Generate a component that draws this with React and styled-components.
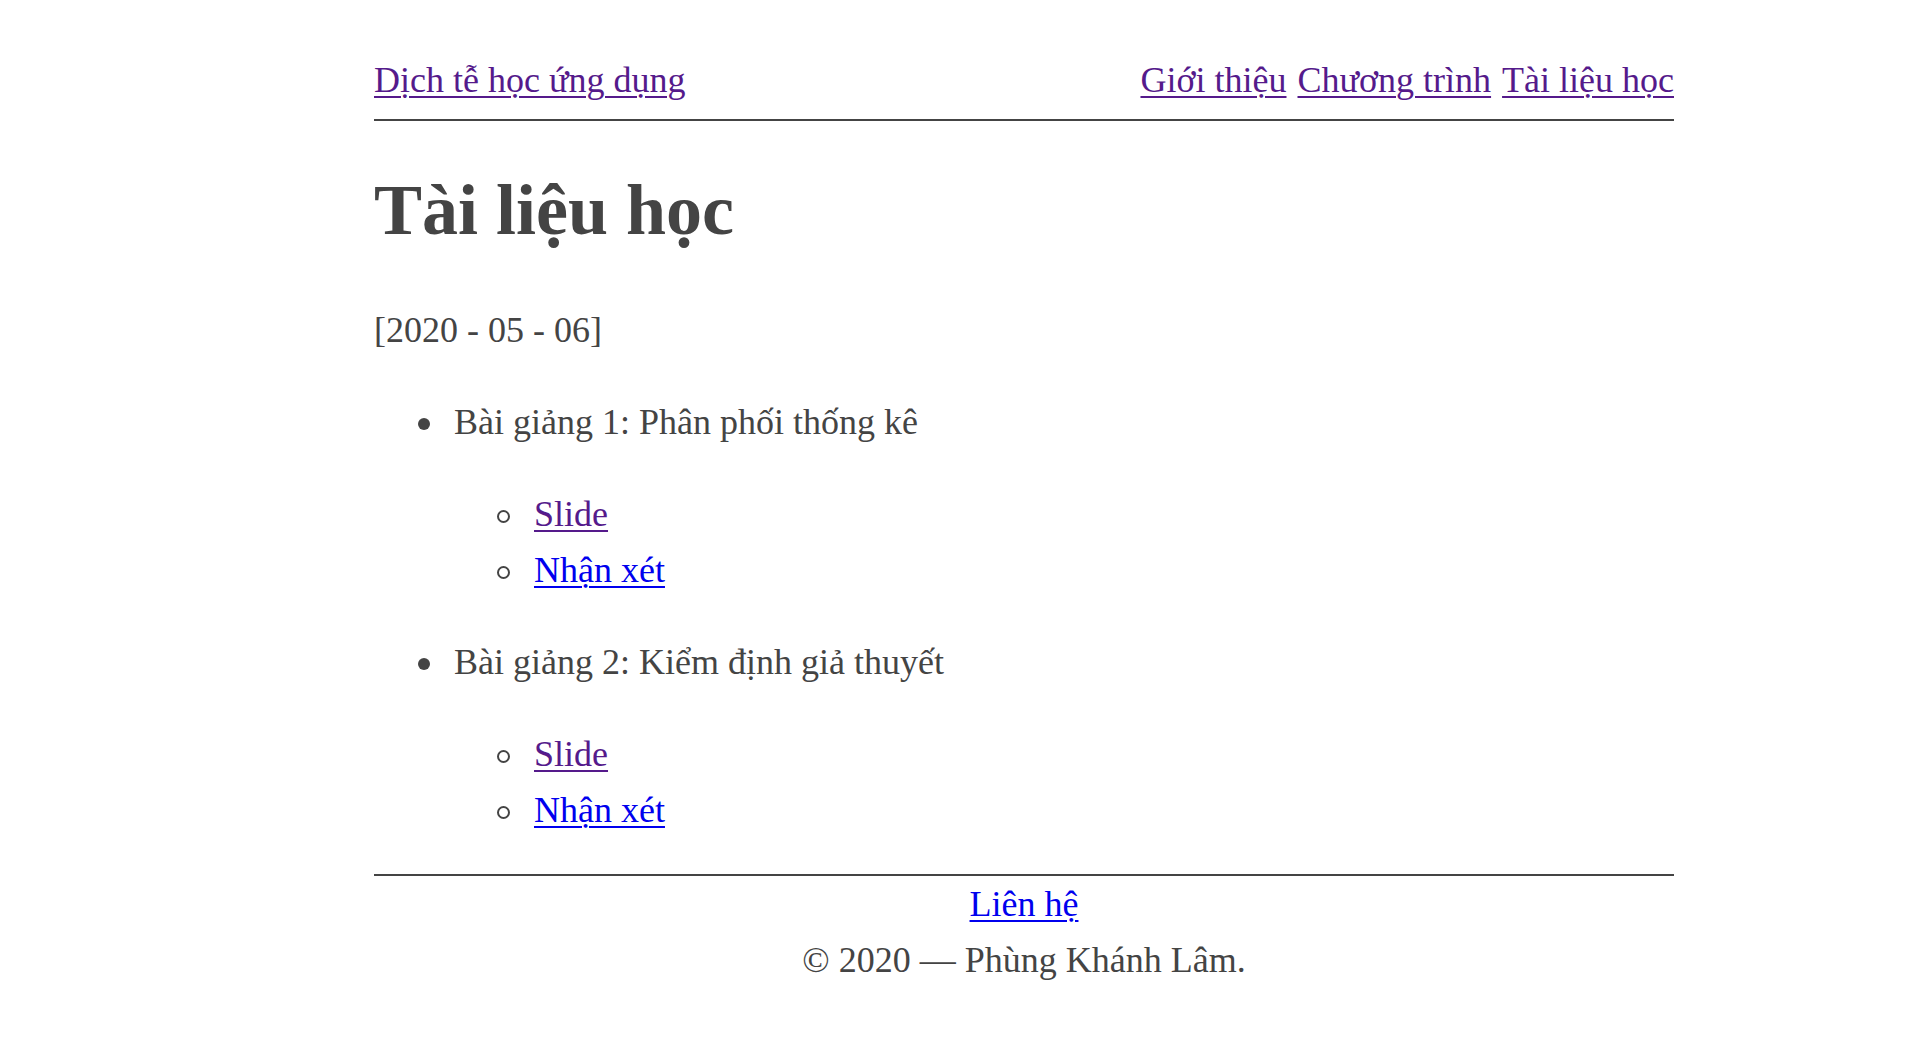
import React from "react";
import styled, { createGlobalStyle } from "styled-components";

const GlobalStyle = createGlobalStyle`
  html, body {
    margin: 0;
    padding: 0;
    background: #fff;
  }
  body {
    font-family: "Liberation Serif", "Times New Roman", serif;
    font-size: 36px;
    line-height: 56px;
    color: #444;
  }
`;

const Page = styled.div`
  width: 1300px;
  margin-left: 374px;
`;

const Link = styled.a`
  color: ${(p) => (p.$visited ? "#551a8b" : "#0000ee")};
  text-decoration: underline;
  text-decoration-thickness: 2px;
  text-underline-offset: 4px;
`;

const Header = styled.header`
  display: flex;
  justify-content: space-between;
  align-items: baseline;
  padding: 52px 0 11px;
  border-bottom: 2px solid #444;
`;

const Menu = styled.nav`
  display: flex;
  gap: 11px;
`;

const Title = styled.h1`
  font-size: 72px;
  line-height: 86px;
  font-weight: bold;
  margin: 46px 0 0;
`;

const DateLine = styled.p`
  margin: 49px 0 0;
`;

const Lectures = styled.ul`
  list-style: none;
  margin: 36px 0 0;
  padding-left: 80px;
`;

const Item = styled.li`
  position: relative;

  &::before {
    content: "";
    position: absolute;
    top: 24px;
    left: -36px;
    width: ${(p) => (p.$ring ? "9px" : "12px")};
    height: ${(p) => (p.$ring ? "9px" : "12px")};
    border-radius: 50%;
    box-sizing: content-box;
    background: ${(p) => (p.$ring ? "transparent" : "#444")};
    border: ${(p) => (p.$ring ? "2px solid #444" : "none")};
    margin-left: ${(p) => (p.$ring ? "-1px" : "0")};
  }
`;

const Lecture = styled(Item)`
  & + & {
    margin-top: 36px;
  }
`;

const LectureTitle = styled.p`
  margin: 0 0 36px;
`;

const SubList = styled.ul`
  list-style: none;
  margin: 0;
  padding-left: 80px;
`;

const Footer = styled.footer`
  margin-top: 36px;
  border-top: 2px solid #444;
  text-align: center;
`;

const FooterLine = styled.div``;

const lectures = [
  { title: "Bài giảng 1: Phân phối thống kê" },
  { title: "Bài giảng 2: Kiểm định giả thuyết" },
];

export default function App() {
  return (
    <>
      <GlobalStyle />
      <Page>
        <Header>
          <Link href="#" $visited>
            Dịch tễ học ứng dụng
          </Link>
          <Menu>
            <Link href="#" $visited>Giới thiệu</Link>
            <Link href="#" $visited>Chương trình</Link>
            <Link href="#" $visited>Tài liệu học</Link>
          </Menu>
        </Header>
        <Title>Tài liệu học</Title>
        <DateLine>[2020 - 05 - 06]</DateLine>
        <Lectures>
          {lectures.map((l) => (
            <Lecture key={l.title}>
              <LectureTitle>{l.title}</LectureTitle>
              <SubList>
                <Item $ring>
                  <Link href="#" $visited>Slide</Link>
                </Item>
                <Item $ring>
                  <Link href="#">Nhận xét</Link>
                </Item>
              </SubList>
            </Lecture>
          ))}
        </Lectures>
        <Footer>
          <FooterLine>
            <Link href="#">Liên hệ</Link>
          </FooterLine>
          <FooterLine>© 2020 — Phùng Khánh Lâm.</FooterLine>
        </Footer>
      </Page>
    </>
  );
}
